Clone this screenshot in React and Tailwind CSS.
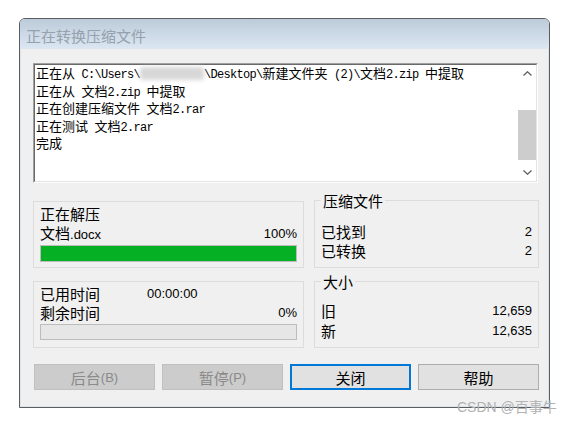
import React from 'react';

// 日志里 ASCII 与汉字混排：ASCII 段用等宽字体并收紧字距，模拟宋体半角宽度
function Mixed({ text }) {
  const parts = text.split(/([\x20-\x7e]+)/);
  return parts.map((p, i) =>
    /^[\x20-\x7e]+$/.test(p) ? (
      <span key={i} className="whitespace-pre font-['Liberation_Mono',monospace] text-[12px] leading-[0] tracking-[-0.7px]">
        {p}
      </span>
    ) : (
      <span key={i}>{p}</span>
    )
  );
}

function Chevron({ down }) {
  return (
    <svg width="9" height="5" viewBox="0 0 9 5" className={down ? 'rotate-180' : ''}>
      <path d="M0.5 4.5 L4.5 0.8 L8.5 4.5" fill="none" stroke="#606060" strokeWidth="1.3" />
    </svg>
  );
}

function ScrollBar() {
  return (
    <div className="flex w-[18px] flex-col bg-white">
      <div className="flex h-[17px] items-center justify-center">
        <Chevron />
      </div>
      <div className="h-[28px]" />
      <div className="h-[50px] bg-[#cdcdcd]" />
      <div className="flex-1" />
      <div className="flex h-[17px] items-center justify-center">
        <Chevron down />
      </div>
    </div>
  );
}

const logLines = ['正在从 文档2.zip 中提取', '正在创建压缩文件 文档2.rar', '正在测试 文档2.rar', '完成'];

function LogBox() {
  return (
    <div className="h-[120px] w-[505px] border border-t-[#a0a0a0] border-l-[#a0a0a0] border-r-white border-b-white">
      <div className="flex h-full border border-t-[#696969] border-l-[#696969] border-r-[#e3e3e3] border-b-[#e3e3e3] bg-white">
        <div className="mt-[-1px] flex-1 pl-[1px] text-[13px] leading-[17.5px] text-black">
          <div className="h-[17.5px] whitespace-nowrap">
            <Mixed text="正在从 C:\Users\" />
            <span className="inline-block h-[13px] w-[64px] rounded-[3px] bg-[#d7d7d7] align-[-2px] blur-[2px]" />
            <Mixed text="\Desktop\新建文件夹 (2)\文档2.zip 中提取" />
          </div>
          {logLines.map((l) => (
            <div key={l} className="h-[17.5px] whitespace-nowrap">
              <Mixed text={l} />
            </div>
          ))}
        </div>
        <ScrollBar />
      </div>
    </div>
  );
}

function Button({ label, hotkey, kind }) {
  const styles = {
    disabled: 'border border-[#bfbfbf] bg-[#cccccc] text-[#8a8a8a]',
    focus: 'border-2 border-[#0078d7] bg-[#e1e1e1] text-black',
    normal: 'border border-[#adadad] bg-[#e1e1e1] text-black',
  };
  return (
    <div className={`flex h-[26px] w-[121px] items-center justify-center text-[15px] leading-[19px] ${styles[kind]}`}>
      <span>{label}</span>
      {hotkey && <span className="font-['Liberation_Sans',sans-serif] text-[13px]">({hotkey})</span>}
    </div>
  );
}

export default function App() {
  return (
    <div className="relative min-h-[426px] w-[573px] bg-white pl-[19px] pt-[18px] font-['Noto_Sans_CJK_SC',sans-serif] text-black">
      <div className="w-[531px] rounded-t-[6px] border border-[#5c5c5c]">
        {/* 标题栏 */}
        <div className="h-[30px] rounded-t-[5px] bg-linear-to-b from-[#bccbda] to-[#dce7f2] pl-[6px] pt-[7px] text-[15px] leading-[19px] text-[#95a1ad]">
          正在转换压缩文件
        </div>

        <div className="border-x border-b border-[#dbe4ee] bg-[#f0f0f0] pb-[16px] pl-[12px] pr-[9px] pt-[14px]">
          <LogBox />

          <div className="mt-[18px] grid grid-cols-[271px_225px] gap-x-[10px]">
            {/* 左侧：进度 */}
            <div className="flex flex-col gap-[13px]">
              <div className="h-[67px] border border-[#dcdcdc] px-[6px] pt-[2px]">
                <div className="text-[15px] leading-[19px]">正在解压</div>
                <div className="flex items-center justify-between leading-[19px]">
                  <span className="text-[15px]">
                    文档<span className="font-['Liberation_Sans',sans-serif] text-[13px]">.docx</span>
                  </span>
                  <span className="font-['Liberation_Sans',sans-serif] text-[13px]">100%</span>
                </div>
                <div className="mt-[1px] h-[17px] border border-[#bcbcbc] bg-[#06b025]" />
              </div>

              <div className="h-[67px] border border-[#dcdcdc] px-[6px] pt-[2px]">
                <div className="flex items-center leading-[19px]">
                  <span className="w-[107px] text-[15px]">已用时间</span>
                  <span className="font-['Liberation_Sans',sans-serif] text-[13px]">00:00:00</span>
                </div>
                <div className="flex items-center justify-between leading-[19px]">
                  <span className="text-[15px]">剩余时间</span>
                  <span className="font-['Liberation_Sans',sans-serif] text-[13px]">0%</span>
                </div>
                <div className="mt-[2px] h-[16px] border border-[#bcbcbc] bg-[#e6e6e6]" />
              </div>
            </div>

            {/* 右侧：统计 */}
            <div className="-mt-[10px] flex flex-col gap-[4px]">
              <fieldset className="border border-[#dcdcdc] px-[6px] pb-[7px]">
                <legend className="px-[2px] text-[15px] leading-[19px]">压缩文件</legend>
                <div className="mt-[12px] flex items-center justify-between leading-[19px]">
                  <span className="text-[15px]">已找到</span>
                  <span className="font-['Liberation_Sans',sans-serif] text-[13px]">2</span>
                </div>
                <div className="flex items-center justify-between leading-[19px]">
                  <span className="text-[15px]">已转换</span>
                  <span className="font-['Liberation_Sans',sans-serif] text-[13px]">2</span>
                </div>
              </fieldset>

              <fieldset className="border border-[#dcdcdc] px-[6px] pb-[6px]">
                <legend className="px-[2px] text-[15px] leading-[19px]">大小</legend>
                <div className="mt-[10px] flex items-center justify-between leading-[20px]">
                  <span className="text-[15px]">旧</span>
                  <span className="font-['Liberation_Sans',sans-serif] text-[13px]">12,659</span>
                </div>
                <div className="flex items-center justify-between leading-[20px]">
                  <span className="text-[15px]">新</span>
                  <span className="font-['Liberation_Sans',sans-serif] text-[13px]">12,635</span>
                </div>
              </fieldset>
            </div>
          </div>

          <div className="mt-[16px] flex gap-[7px] pl-[1px]">
            <Button label="后台" hotkey="B" kind="disabled" />
            <Button label="暂停" hotkey="P" kind="disabled" />
            <Button label="关闭" kind="focus" />
            <Button label="帮助" kind="normal" />
          </div>
        </div>
      </div>

      {/* 水印 */}
      <div className="absolute left-[457px] top-[398px] whitespace-nowrap font-['Liberation_Sans','Noto_Sans_CJK_SC',sans-serif] text-[14px] leading-[19px] text-[#b2b2b2]">
        CSDN @百事牛
      </div>
    </div>
  );
}
